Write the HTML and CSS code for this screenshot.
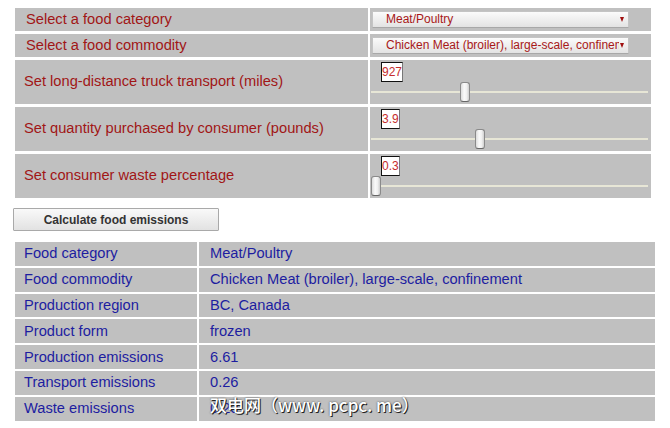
FILE: index.html
```html
<!DOCTYPE html>
<html lang="en">
<head>
<meta charset="utf-8">
<title>Food emissions calculator</title>
<link rel="stylesheet" href="styles.css">
</head>
<body>
<div class="page">
  <div class="form-grid">
    <div class="label label-pick">Select a food category</div>
    <div class="field field-pick">
      <span class="select-wrap">
        <select class="select"><option>Meat/Poultry</option></select>
      </span>
    </div>

    <div class="label label-pick">Select a food commodity</div>
    <div class="field field-pick">
      <span class="select-wrap">
        <select class="select"><option>Chicken Meat (broiler), large-scale, confinement</option></select>
      </span>
    </div>

    <div class="label">Set long-distance truck transport (miles)</div>
    <div class="field field-slider">
      <span class="value">927</span>
      <input class="slider" type="range" min="0" max="2780" value="927">
    </div>

    <div class="label">Set quantity purchased by consumer (pounds)</div>
    <div class="field field-slider">
      <span class="value">3.9</span>
      <input class="slider" type="range" min="0" max="10" step="0.1" value="3.9">
    </div>

    <div class="label">Set consumer waste percentage</div>
    <div class="field field-slider">
      <span class="value">0.3</span>
      <input class="slider" type="range" min="0.3" max="100" step="0.1" value="0.3">
    </div>
  </div>

  <button class="calc" type="button">Calculate food emissions</button>

  <div class="results">
    <div class="r-label">Food category</div><div class="r-value">Meat/Poultry</div>
    <div class="r-label">Food commodity</div><div class="r-value">Chicken Meat (broiler), large-scale, confinement</div>
    <div class="r-label">Production region</div><div class="r-value">BC, Canada</div>
    <div class="r-label">Product form</div><div class="r-value">frozen</div>
    <div class="r-label">Production emissions</div><div class="r-value">6.61</div>
    <div class="r-label">Transport emissions</div><div class="r-value">0.26</div>
    <div class="r-label">Waste emissions</div><div class="r-value">0.20</div>
  </div>

  <div class="watermark">双电网（www. pcpc. me）</div>
</div>
</body>
</html>
```

FILE: styles.css
```css
html, body {
  margin: 0;
  padding: 0;
  background: #ffffff;
}

body {
  font-family: "Liberation Sans", Arial, sans-serif;
}

.page {
  position: relative;
  padding-top: 8px;
  width: 670px;
  height: 428px;
  box-sizing: border-box;
}

/* ---------- input form ---------- */
.form-grid {
  margin-left: 15px;
  display: grid;
  grid-template-columns: 353px 281px;
  grid-template-rows: 23px 23px 44px 44px 44px;
  gap: 3px 2px;
}

.label {
  background: #c0c0c0;
  color: #a11616;
  font-size: 11pt;
  display: flex;
  align-items: center;
  padding-left: 9px;
  padding-bottom: 2px;
}

.label-pick {
  padding-left: 11px;
}

.field {
  background: #c0c0c0;
}

.field-pick {
  display: flex;
  align-items: center;
  padding-left: 2px;
}

.select-wrap {
  position: relative;
  display: block;
}

.select-wrap::after {
  content: "";
  position: absolute;
  right: 5px;
  top: 6px;
  width: 0;
  height: 0;
  border-left: 2.5px solid transparent;
  border-right: 2.5px solid transparent;
  border-top: 5px solid #a01010;
  pointer-events: none;
}

.select {
  -webkit-appearance: none;
  appearance: none;
  display: block;
  width: 257px;
  height: 17px;
  margin: 0;
  padding: 0 9px 0 13px;
  border: 1px solid #c4c4c4;
  border-bottom-color: #a8a8a8;
  border-radius: 1px;
  background: linear-gradient(#fbfbfb, #e3e3e3);
  color: #a81818;
  font-family: "Liberation Sans", Arial, sans-serif;
  font-size: 12px;
  line-height: 15px;
  box-sizing: border-box;
}

.field-slider {
  display: flex;
  flex-direction: column;
  align-items: flex-start;
  padding-top: 2px;
}

.value {
  margin-left: 11px;
  background: #ffffff;
  border: 1px solid #111;
  border-right-color: #777;
  color: #c62d2d;
  font-size: 12px;
  line-height: 18px;
  height: 18px;
}

.slider {
  -webkit-appearance: none;
  appearance: none;
  display: block;
  margin: 0 0 0 1px;
  padding: 0;
  width: 277px;
  height: 20px;
  background: transparent;
}

.slider::-webkit-slider-runnable-track {
  height: 2px;
  background: #e7e6d6;
}

.slider::-webkit-slider-thumb {
  -webkit-appearance: none;
  appearance: none;
  width: 10px;
  height: 20px;
  margin-top: -9px;
  border: 1px solid #8a8a8a;
  border-bottom-color: #666;
  border-radius: 3px;
  background: linear-gradient(90deg, #dcdcdc, #fafafa 40%, #f0f0f0 70%, #cfcfcf);
  box-sizing: border-box;
}

/* ---------- button ---------- */
.calc {
  display: block;
  margin: 10px 0 0 13px;
  width: 206px;
  height: 23px;
  padding: 0;
  border: 1px solid #a9a9a9;
  border-radius: 1px;
  background: linear-gradient(#f9f9f9, #e2e2e2);
  color: #333333;
  font-family: "Liberation Sans", Arial, sans-serif;
  font-size: 12px;
  font-weight: bold;
}

/* ---------- results ---------- */
.results {
  margin: 11px 0 0 15px;
  display: grid;
  grid-template-columns: 182px 456px;
  grid-auto-rows: 23.8px;
  gap: 2px 2px;
}

.r-label,
.r-value {
  background: #c0c0c0;
  color: #1d1da0;
  font-size: 11pt;
  display: flex;
  align-items: center;
  padding-bottom: 1px;
}

.r-label {
  padding-left: 9px;
}

.r-value {
  padding-left: 11px;
}

/* ---------- watermark overlay ---------- */
.watermark {
  position: absolute;
  left: 210px;
  top: 394px;
  font-family: "Noto Sans CJK SC", sans-serif;
  font-size: 17px;
  font-weight: 500;
  line-height: 22px;
  color: #ffffff;
  text-shadow: 1px 1px 0 #222, 0 0 2px #444;
  white-space: nowrap;
}
```
